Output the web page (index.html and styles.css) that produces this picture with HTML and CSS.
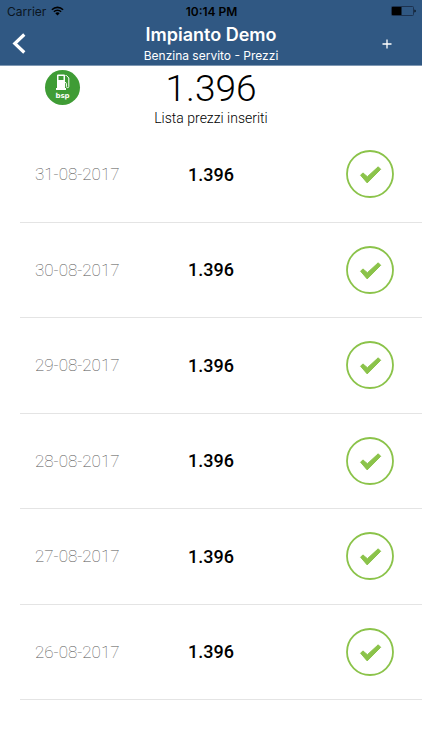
FILE: index.html
```html
<!DOCTYPE html>
<html lang="it">
<head>
<meta charset="utf-8">
<meta name="viewport" content="width=device-width, initial-scale=1">
<title>Impianto Demo</title>
<link rel="stylesheet" href="styles.css">
</head>
<body>
<svg class="defs" aria-hidden="true">
  <symbol id="check" viewBox="0 0 48 48">
    <circle cx="24" cy="24" r="23" fill="none" stroke="#8bc34a" stroke-width="1.800"/>
    <path d="M14.600 25.200l2.300-2.300 4.500 3.800 10.800-9.900 2.500 2.500-13.500 13.600z" fill="#8bc34a" stroke="#8bc34a" stroke-linejoin="round"/>
  </symbol>
</svg>
<header class="header">
  <div class="status">
    <span class="carrier">Carrier
      <svg width="13" height="10" viewBox="0 0 13 10" aria-hidden="true">
        <path d="M0.9 3.7a8 8 0 0 1 11.2 0M2.9 5.8a5.1 5.1 0 0 1 7.2 0" fill="none" stroke="#000" stroke-width="1.6"/>
        <path d="M4.3 7.3a3.1 3.1 0 0 1 4.4 0L6.5 9.6z"/>
      </svg>
    </span>
    <span class="time">10:14 PM</span>
    <svg class="battery" width="25" height="10" viewBox="0 0 25 10" aria-hidden="true">
      <rect x="0.5" y="0.5" width="22" height="9" rx="1" fill="none" stroke="#1c3250"/>
      <rect x="1" y="1" width="9.500" height="8"/>
      <path d="M23.500 3.500c1.500 .3 1.500 2.700 0 3z"/>
    </svg>
  </div>
  <div class="nav">
    <a class="back" href="#" aria-label="Indietro">
      <svg width="14" height="22" viewBox="0 0 14 22" aria-hidden="true"><path d="M12.300 1.500 2.800 10.500l9.500 9" fill="none" stroke="#fff" stroke-width="3.200"/></svg>
    </a>
    <div class="titles">
      <h1>Impianto Demo</h1>
      <p>Benzina servito - Prezzi</p>
    </div>
    <button class="add" type="button" aria-label="Aggiungi">
      <svg width="10" height="10" viewBox="0 0 10 10" aria-hidden="true"><path d="M5 .5v9M.5 5h9" stroke="#fff" stroke-width="1.300"/></svg>
    </button>
  </div>
</header>
<main class="main">
  <section class="summary">
    <div class="fuel">
      <svg width="17" height="17" viewBox="0 0 17 17" aria-hidden="true">
        <path fill="#fff" fill-rule="evenodd" d="M3 1.500Q3 .5 4 .5h6q1 0 1 1V14h1v2H2v-2h1zM4.500 2v4h5V2z"/>
        <path d="M11.500 1.500h1l2.300 2.500v8.500q0 1.200-1.200 1.200t-1.200-1.200V9.500q0-1-1.400-1" fill="none" stroke="#fff" stroke-width="1"/>
      </svg>
      <span>bsp</span>
    </div>
    <div class="current">
      <strong>1.396</strong>
      <h2>Lista prezzi inseriti</h2>
    </div>
  </section>
  <ul class="prices">
    <li><time datetime="2017-08-31">31-08-2017</time><b>1.396</b><svg class="check" role="img" aria-label="Confermato"><use href="#check"/></svg></li>
    <li><time datetime="2017-08-30">30-08-2017</time><b>1.396</b><svg class="check" role="img" aria-label="Confermato"><use href="#check"/></svg></li>
    <li><time datetime="2017-08-29">29-08-2017</time><b>1.396</b><svg class="check" role="img" aria-label="Confermato"><use href="#check"/></svg></li>
    <li><time datetime="2017-08-28">28-08-2017</time><b>1.396</b><svg class="check" role="img" aria-label="Confermato"><use href="#check"/></svg></li>
    <li><time datetime="2017-08-27">27-08-2017</time><b>1.396</b><svg class="check" role="img" aria-label="Confermato"><use href="#check"/></svg></li>
    <li><time datetime="2017-08-26">26-08-2017</time><b>1.396</b><svg class="check" role="img" aria-label="Confermato"><use href="#check"/></svg></li>
  </ul>
</main>
</body>
</html>
```
FILE: styles.css
```css
* { box-sizing: border-box; }
body {
  margin: 0;
  min-height: 100vh;
  display: flex;
  flex-direction: column;
  background: #fff;
  color: #000;
  font-family: Roboto, "Liberation Sans", sans-serif;
}
h1, h2, p, ul { margin: 0; padding: 0; }
.defs { display: none; }
.header {
  background: #305883;
  border-bottom: 1px solid #7f98b3;
  font-family: Inter, "Liberation Sans", sans-serif;
}
.status {
  display: grid;
  grid-template-columns: 1fr auto 1fr;
  align-items: center;
  height: 22px;
  padding: 0 6px 0 7px;
  font-size: 12px;
}
.carrier { display: flex; align-items: center; gap: 5px; color: #0b1520; }
.time { font-weight: 600; }
.battery { justify-self: end; }
.nav {
  display: grid;
  grid-template-columns: 60px 1fr 60px;
  align-items: center;
  height: 43px;
  color: #fff;
}
.back { display: flex; padding: 10px 12px; }
.titles { text-align: center; }
h1 { font-size: 18px; line-height: 24px; font-weight: 600; }
.titles p { font-size: 12px; line-height: 17px; }
.add {
  display: flex;
  justify-content: center;
  width: 50px;
  padding: 16px 0;
  border: 0;
  background: none;
}
.main { flex: 1; display: flex; flex-direction: column; padding-bottom: 50px; }
.summary {
  display: grid;
  grid-template-columns: 80px 1fr 80px;
  height: 61px;
}
.fuel {
  display: flex;
  flex-direction: column;
  align-items: center;
  justify-self: end;
  width: 35px;
  height: 35px;
  margin-top: 4px;
  padding-top: 4px;
  border-radius: 50%;
  background: #3f9c35;
  color: #fff;
  font: 700 7px/10px "DejaVu Sans", sans-serif;
}
.current { text-align: center; }
.current strong { display: block; font-size: 37px; line-height: 45px; font-weight: 300; }
h2 { font-size: 14px; line-height: 14px; font-weight: 300; }
.prices {
  flex: 1;
  display: grid;
  grid-auto-rows: 1fr;
  margin-left: 20px;
  list-style: none;
}
.prices li {
  display: grid;
  grid-template-columns: 1fr 80px 1fr;
  align-items: center;
  padding-right: 20px;
  border-bottom: 1px solid #e4e4e4;
}
time { padding-left: 15px; font-size: 17px; font-weight: 100; color: #555; }
b { font-size: 18px; font-weight: 500; text-align: center; }
.check { justify-self: end; width: 48px; height: 48px; margin-right: 8px; }
```
